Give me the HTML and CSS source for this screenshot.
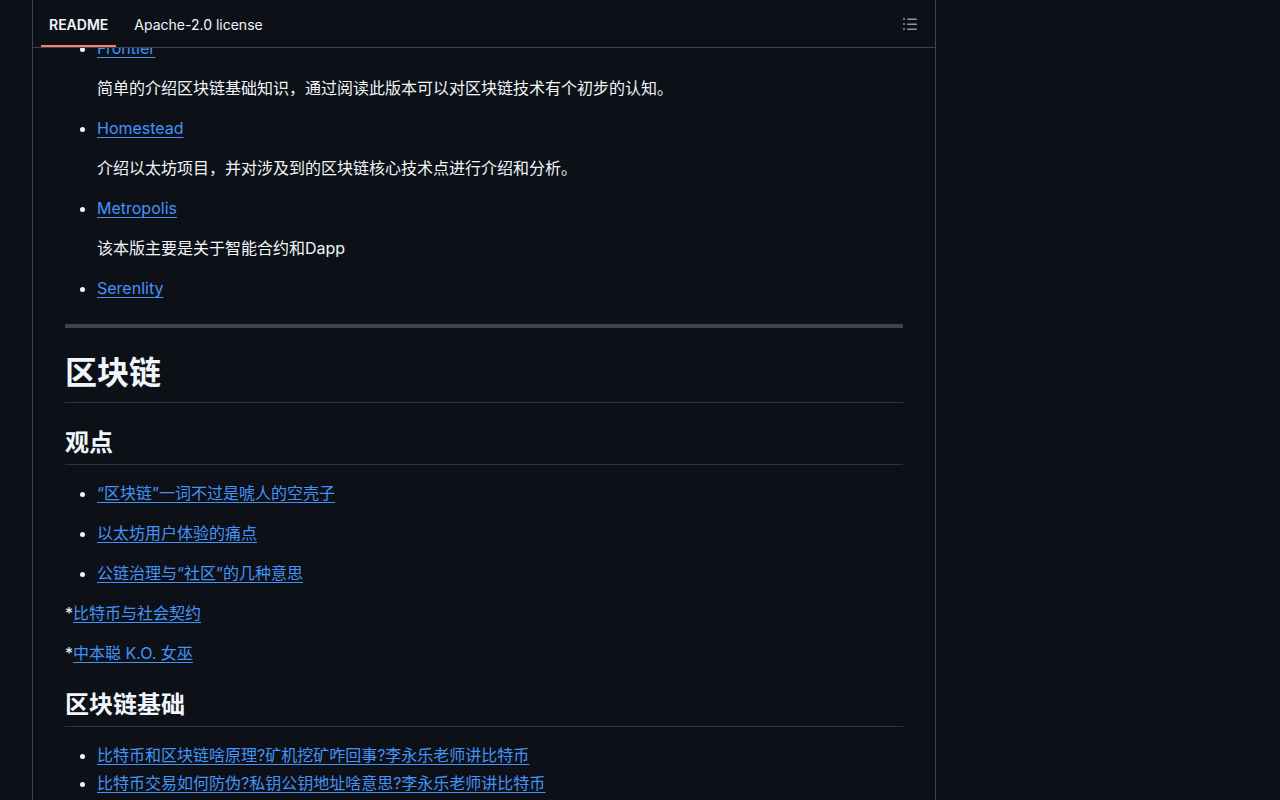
FILE: index.html
```html
<!DOCTYPE html>
<html lang="zh-CN">
<head>
    <meta charset="UTF-8">
    <meta name="viewport" content="width=device-width, initial-scale=1.0">
    <title>README</title>
    <link rel="stylesheet" href="styles.css">
</head>
<body>
    <main class="panel">
        <header class="panel-header">
            <nav class="tabs">
                <a class="tab active" href="#readme">README</a>
                <a class="tab" href="#license">Apache-2.0 license</a>
            </nav>
            <button class="outline-btn" type="button" aria-label="Outline">
                <svg width="16" height="16" viewBox="0 0 16 16" fill="currentColor" aria-hidden="true">
                    <path d="M5.75 2.5h8.5a.75.75 0 0 1 0 1.5h-8.5a.75.75 0 0 1 0-1.5Zm0 5h8.5a.75.75 0 0 1 0 1.5h-8.5a.75.75 0 0 1 0-1.5Zm0 5h8.5a.75.75 0 0 1 0 1.5h-8.5a.75.75 0 0 1 0-1.5ZM2 14a1 1 0 1 1 0-2 1 1 0 0 1 0 2Zm1-6a1 1 0 1 1-2 0 1 1 0 0 1 2 0ZM2 4a1 1 0 1 1 0-2 1 1 0 0 1 0 2Z"/>
                </svg>
            </button>
        </header>

        <article class="markdown" id="readme">
            <ul class="loose">
                <li>
                    <p><a href="#">Frontier</a></p>
                    <p>简单的介绍区块链基础知识，通过阅读此版本可以对区块链技术有个初步的认知。</p>
                </li>
                <li>
                    <p><a href="#">Homestead</a></p>
                    <p>介绍以太坊项目，并对涉及到的区块链核心技术点进行介绍和分析。</p>
                </li>
                <li>
                    <p><a href="#">Metropolis</a></p>
                    <p>该本版主要是关于智能合约和Dapp</p>
                </li>
                <li>
                    <p><a href="#">Serenlity</a></p>
                </li>
            </ul>

            <hr>

            <h1>区块链</h1>

            <h2>观点</h2>
            <ul class="loose">
                <li><p><a href="#">“区块链”一词不过是唬人的空壳子</a></p></li>
                <li><p><a href="#">以太坊用户体验的痛点</a></p></li>
                <li><p><a href="#">公链治理与“社区”的几种意思</a></p></li>
            </ul>
            <p>*<a href="#">比特币与社会契约</a></p>
            <p>*<a href="#">中本聪 K.O. 女巫</a></p>

            <h2>区块链基础</h2>
            <ul class="tight">
                <li><a href="#">比特币和区块链啥原理?矿机挖矿咋回事?李永乐老师讲比特币</a></li>
                <li><a href="#">比特币交易如何防伪?私钥公钥地址啥意思?李永乐老师讲比特币</a></li>
            </ul>
        </article>
    </main>
</body>
</html>
```
FILE: styles.css
```css
* {
    box-sizing: border-box;
}

body {
    margin: 0;
    background: #0d1117;
    color: #f0f6fc;
    font-family: Inter, "Noto Sans CJK SC", sans-serif;
    font-size: 16px;
    line-height: 24px;
}

.panel {
    min-height: 100vh;
    margin: 0 344px 0 32px;
    border-left: 1px solid #3d444d;
    border-right: 1px solid #3d444d;
}

.panel-header {
    position: sticky;
    top: 0;
    z-index: 1;
    display: flex;
    align-items: center;
    justify-content: space-between;
    height: 48px;
    padding: 0 9px 0 8px;
    background: #0d1117;
    border-bottom: 1px solid #3d444d;
}

.tabs {
    display: flex;
    align-self: stretch;
    gap: 10px;
}

.tab {
    display: flex;
    align-items: center;
    padding: 4px 8px 0;
    border-bottom: 2px solid transparent;
    color: #f0f6fc;
    font-size: 14px;
    text-decoration: none;
}

.tab.active {
    border-bottom-color: #f78166;
    font-weight: 600;
}

.outline-btn {
    display: flex;
    align-items: center;
    justify-content: center;
    width: 32px;
    height: 32px;
    padding: 0;
    border: none;
    border-radius: 6px;
    background: transparent;
    color: #9198a1;
    cursor: pointer;
}

/* the text is scrolled a little way under the sticky header */
.markdown {
    margin-top: -12px;
    padding: 0 32px;
}

.markdown a {
    color: #4493f8;
    text-decoration: underline;
    text-decoration-thickness: 1px;
    text-decoration-skip-ink: none;
    text-underline-offset: 3px;
}

.markdown p,
.markdown ul {
    margin: 0 0 16px;
}

.markdown ul {
    padding-left: 32px;
}

.markdown ul:last-child {
    margin-bottom: 0;
}

.tight li + li {
    margin-top: 4px;
}

.markdown hr {
    height: 4px;
    margin: 24px 0;
    border: none;
    background: #3d444d;
}

.markdown h1,
.markdown h2 {
    margin: 24px 0 16px;
    border-bottom: 1px solid #2f353d;
    font-weight: 600;
}

.markdown h1 {
    padding-bottom: 8px;
    font-size: 32px;
    line-height: 42px;
}

.markdown h2 {
    padding-bottom: 5px;
    font-size: 24px;
    line-height: 32px;
}
```
